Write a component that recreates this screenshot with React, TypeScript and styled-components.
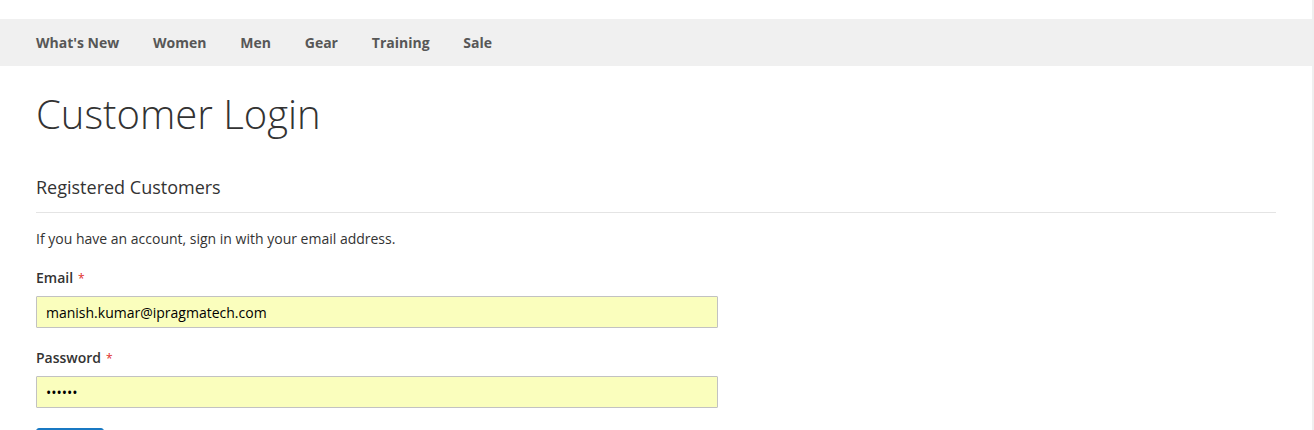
import styled, { createGlobalStyle } from 'styled-components';

const GlobalStyle = createGlobalStyle`
  html, body {
    margin: 0;
    padding: 0;
    overflow: hidden;
    background: #fff;
  }

  body {
    font-family: 'Open Sans', 'Liberation Sans', sans-serif;
    color: #333;
  }

  * {
    box-sizing: border-box;
  }
`;

const StyledPage = styled.div`
  display: flex;
  width: 1314px;
  height: 430px;

  .page__main {
    flex: 1;
    padding-top: 19px;
  }

  .page__scroll {
    width: 2px;
    background-color: #efefef;
  }
`;

const StyledNav = styled.nav`
  display: flex;
  align-items: center;
  gap: 33.8px;
  height: 47px;
  padding-left: 36px;
  background-color: #f0f0f0;

  .nav__link {
    font-size: 14px;
    font-weight: 700;
    line-height: 20px;
    color: #575757;
    text-decoration: none;
  }
`;

const StyledContent = styled.main`
  padding: 0 36px;

  .content__title {
    margin: 26px 0 0;
    font-size: 40px;
    font-weight: 300;
    line-height: 44px;
    color: #333;
  }

  .content__block {
    margin-top: 40px;
  }

  .content__block-title {
    margin: 0;
    padding-bottom: 14px;
    border-bottom: 1px solid #e4e4e4;
    font-size: 18px;
    font-weight: 400;
    line-height: 22px;
  }

  .content__note {
    margin: 16px 0 0;
    font-size: 14px;
    line-height: 20px;
  }
`;

const StyledField = styled.div<{ first?: boolean }>`
  margin-top: ${({ first }) => first ? '19px' : '20px'};
  width: 682px;

  .field__label {
    display: block;
    height: 20px;
    margin-bottom: 8px;
    font-size: 14px;
    font-weight: 600;
    line-height: 20px;
  }

  .field__required {
    margin-left: 5px;
    color: #e02b27;
    font-size: 12px;
    font-weight: 400;
    line-height: 1;
  }

  .field__input {
    display: block;
    width: 100%;
    height: 32px;
    padding: 0 9px;
    border: 1px solid #c2c2c2;
    border-radius: 1px;
    background-color: #fafebd;
    font-family: 'Open Sans', 'Liberation Sans', sans-serif;
    font-size: 14px;
    color: #000;
    outline: none;
  }
`;

const StyledButton = styled.button`
  margin-top: 20px;
  width: 68px;
  padding: 7px 0;
  border: 1px solid #1979c3;
  border-radius: 3px;
  background-color: #1979c3;
  color: #fff;
  font-family: 'Open Sans', 'Liberation Sans', sans-serif;
  font-size: 14px;
  font-weight: 600;
`;

const navItems = ["What's New", 'Women', 'Men', 'Gear', 'Training', 'Sale'];

type FieldProps = {
  label: string;
  type: string;
  value: string;
  first?: boolean;
};

function Field(props: FieldProps): JSX.Element {
  const { label, type, value, first } = props;

  return (
    <StyledField first={first}>
      <label className="field__label">
        {label}
        <span className="field__required">*</span>
      </label>
      <input className="field__input" type={type} value={value} readOnly />
    </StyledField>
  );
}

export default function App(): JSX.Element {
  return (
    <>
      <GlobalStyle />
      <StyledPage>
        <div className="page__main">
          <StyledNav>
            {navItems.map((item) => (
              <a className="nav__link" href="#" key={item}>{item}</a>
            ))}
          </StyledNav>
          <StyledContent>
            <h1 className="content__title">Customer Login</h1>
            <div className="content__block">
              <h2 className="content__block-title">Registered Customers</h2>
              <p className="content__note">If you have an account, sign in with your email address.</p>
              <Field label="Email" type="email" value="manish.kumar@ipragmatech.com" first />
              <Field label="Password" type="password" value="123456" />
              <StyledButton>Sign In</StyledButton>
            </div>
          </StyledContent>
        </div>
        <div className="page__scroll" />
      </StyledPage>
    </>
  );
}
